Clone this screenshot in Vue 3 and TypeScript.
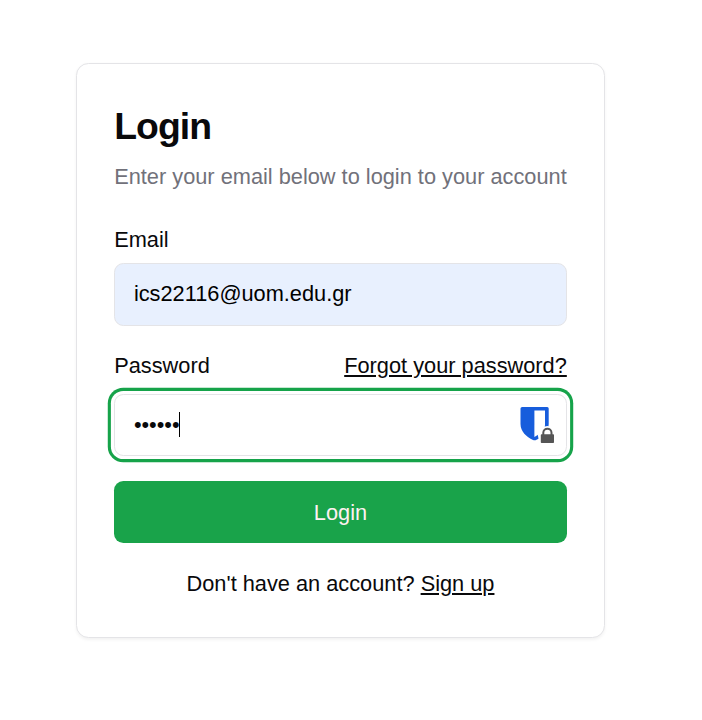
<script setup lang="ts">
import { ref } from 'vue'

const email = ref<string>('ics22116@uom.edu.gr')
const password = ref<string>('••••••')
</script>

<template>
  <main class="page">
    <section class="card">
      <header class="header">
        <h1 class="title">Login</h1>
        <p class="description">Enter your email below to login to your account</p>
      </header>
      <form class="form" @submit.prevent>
        <div class="group">
          <label class="label" for="email">Email</label>
          <input id="email" v-model="email" class="field filled" type="text" spellcheck="false" />
        </div>
        <div class="group">
          <div class="label-row">
            <span class="label">Password</span>
            <a class="link forgot" href="#">Forgot your password?</a>
          </div>
          <div class="field focused">
            <span class="value">{{ password }}</span>
            <span class="caret"></span>
            <svg class="vault" width="36" height="38" viewBox="0 0 36 38" aria-hidden="true">
              <path fill="#175ddc" d="M2.2 1H27.2Q28.700 1 28.700 2.500V18C28.700 26 22 31.500 16.500 33.700Q14.800 34.700 13 33.900C6.500 31 0.500 25.500 0.500 18V2.500Q0.500 1 2.200 1Z" />
              <path fill="#fff" d="M14.400 4.400H25V19C25 24 20 28 14.400 31Z" />
              <circle cx="27.300" cy="29.500" r="9.400" fill="#fff" />
              <path fill="none" stroke="#555" stroke-width="2" d="M23.300 30V26.700C23.300 21.400 31.500 21.400 31.500 26.700V30" />
              <rect x="20.800" y="28.300" width="13.200" height="8.700" rx="0.800" fill="#555" />
            </svg>
          </div>
        </div>
        <button class="submit" type="submit">Login</button>
      </form>
      <p class="footer">Don't have an account? <a class="link" href="#">Sign up</a></p>
    </section>
  </main>
</template>

<style>
body {
  background: #fff;
}
</style>

<style scoped>
* {
  box-sizing: border-box;
}
.page {
  height: 720px;
  padding: 63px 97px 0 76px;
  overflow: hidden;
  color: #09090b;
  font-family: "Liberation Sans", Arial, sans-serif;
  font-size: 21.78px;
  line-height: 31px;
}
.card {
  height: 575px;
  padding: 37px 37.2px 37px 37.2px;
  border: 1px solid #e4e4e7;
  border-radius: 12.5px;
  background: #fff;
  box-shadow: 0 1.56px 3.12px rgba(0, 0, 0, 0.05);
}
.header {
  display: flex;
  flex-direction: column;
  gap: 15px;
  padding-top: 7px;
}
.title {
  margin: 0;
  font-size: 37.33px;
  line-height: 37.5px;
  font-weight: 700;
  letter-spacing: -0.933px;
}
.description {
  margin: 0;
  color: #71717a;
  white-space: nowrap;
}
.form {
  display: grid;
  gap: 25px;
  margin-top: 37px;
}
.group {
  display: grid;
  gap: 12px;
}
.label {
  display: block;
  line-height: 22px;
}
.label-row {
  display: flex;
  align-items: center;
  justify-content: space-between;
  height: 31px;
}
.link {
  color: inherit;
  text-decoration: underline;
  text-underline-offset: auto;
}
.forgot {
  line-height: 22px;
}
.field {
  display: flex;
  align-items: center;
  width: 100%;
  height: 62px;
  margin: 0;
  padding: 0 18.7px;
  border: 1px solid #e4e4e7;
  border-radius: 9.33px;
  background: #fff;
  color: #09090b;
  font: inherit;
  outline: none;
}
.filled {
  height: 63px;
  background: #e8f0fe;
  color: #000;
}
.focused {
  padding-right: 9.8px;
  box-shadow: 0 0 0 3.11px #fff, 0 0 0 6.22px #16a34a;
}
.caret {
  width: 1px;
  height: 25px;
  margin-left: -0.7px;
  background: #000;
}
.vault {
  margin-left: auto;
}
.submit {
  height: 62px;
  margin: 0;
  padding: 2px 0 0;
  border: 0;
  border-radius: 9.33px;
  background: #19a34a;
  color: #fff1f2;
  font: inherit;
}
.footer {
  margin: 25px 0 0;
  text-align: center;
}
</style>
